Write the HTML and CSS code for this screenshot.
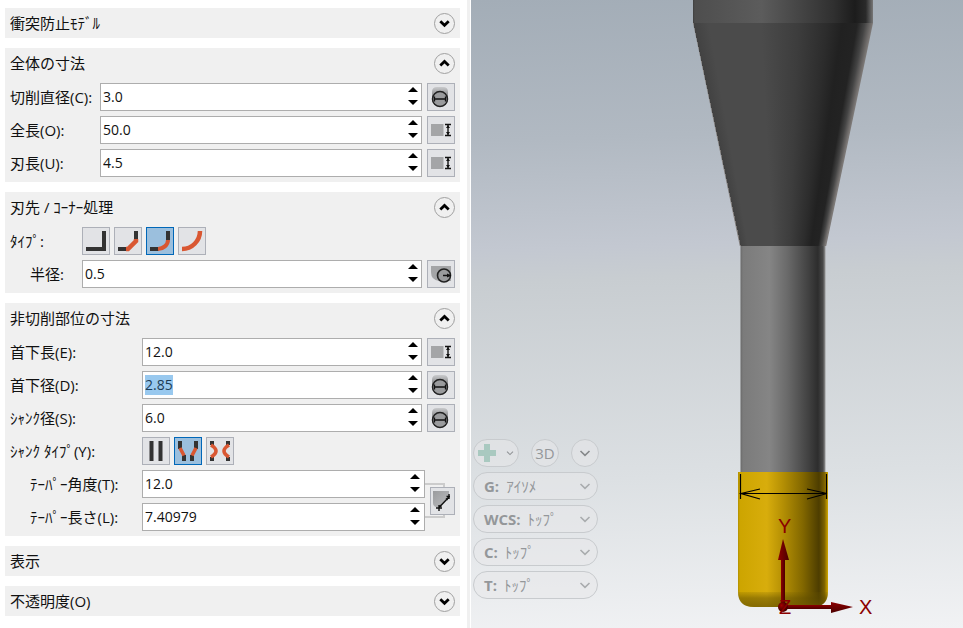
FILE: index.html
```html
<!DOCTYPE html>
<html lang="ja">
<head>
<meta charset="utf-8">
<title>工具の寸法</title>
<link rel="stylesheet" href="styles.css">
</head>
<body>
<svg class="defs" aria-hidden="true">
  <defs>
    <linearGradient id="icon-shade" x1="0" y1="0" x2="0" y2="1">
      <stop offset="0" stop-color="#c9cacc"/><stop offset=".4" stop-color="#8f9092"/><stop offset="1" stop-color="#6e6f71"/>
    </linearGradient>
    <linearGradient id="icon-grey" x1="0" y1="0" x2="1" y2="1">
      <stop offset="0" stop-color="#9a9b9d"/><stop offset="1" stop-color="#bcbdc0"/>
    </linearGradient>
  </defs>
  <symbol id="chev-down" viewBox="0 0 11 11"><path d="M1.300 3.300 5.500 7.300 9.700 3.300" fill="none" stroke="#000" stroke-width="2.800"/></symbol>
  <symbol id="chev-up" viewBox="0 0 11 11"><path d="M1.300 7.500 5.500 3.500 9.700 7.500" fill="none" stroke="#000" stroke-width="2.800"/></symbol>
  <symbol id="chev-thin" viewBox="0 0 12 12"><path d="M1.500 4 6 8.300 10.500 4" fill="none" stroke="currentColor" stroke-width="1.600"/></symbol>
  <symbol id="tri-up" viewBox="0 0 10 5"><path d="M0 5 5 0 10 5Z"/></symbol>
  <symbol id="tri-down" viewBox="0 0 10 5"><path d="M0 0 5 5 10 0Z"/></symbol>
  <symbol id="i-diameter" viewBox="0 0 26 26">
    <path d="M4 15V8Q4 3 9 3h6q5 0 5 5v7a8 8 0 0 1-16 0Z" fill="url(#icon-shade)"/>
    <circle cx="12" cy="15" r="7.500" fill="#9a9b9d" stroke="#222" stroke-width="1.500"/>
    <path d="M6 15h12M6.500 12.500v5M17.500 12.500v5" fill="none" stroke="#111" stroke-width="1.300"/>
  </symbol>
  <symbol id="i-length" viewBox="0 0 26 26">
    <path d="M3 7h12.500v12H3Z" fill="#a4a5a7"/>
    <path d="M17 7.500h6M17 18.500h6M20 7v12" fill="none" stroke="#111" stroke-width="1.400"/>
    <path d="m20 8 2 3h-4ZM20 18l2-3h-4Z" fill="#111"/>
  </symbol>
  <symbol id="i-radius" viewBox="0 0 26 26">
    <path d="M3 5h20v15H11q-8-1-8-9Z" fill="#a4a5a7"/>
    <circle cx="16" cy="14.500" r="6.500" fill="#9a9b9d" stroke="#222" stroke-width="1.600"/>
    <path d="M15 14.500h8" stroke="#111" stroke-width="1.500"/>
    <path d="m23 14.500-4-2v4Z" fill="#111"/>
  </symbol>
  <symbol id="i-taper" viewBox="0 0 23 26">
    <path d="M2 3h16v6L8 19H5q-3-1-3-4Z" fill="url(#icon-grey)"/>
    <path d="M7.500 20 18 9M5 20h6M8 17v6M18 6v5M15.500 8.500H19" fill="none" stroke="#111" stroke-width="1.400"/>
    <path d="m8 19.500 1-3 2 2ZM17.500 9.500l-3 1 2 2Z" fill="#111"/>
  </symbol>
  <symbol id="c-square" viewBox="0 0 26 26"><path d="M3 21h18V3" fill="none" stroke="#333" stroke-width="4"/></symbol>
  <symbol id="c-chamfer" viewBox="0 0 26 26"><path d="M3 21h9M21 12V3" fill="none" stroke="#333" stroke-width="4"/><path d="M11 21h2l8-8v-2" fill="none" stroke="#d95732" stroke-width="4.500"/></symbol>
  <symbol id="c-round" viewBox="0 0 26 26"><path d="M3 21h9M21 12V3" fill="none" stroke="#333" stroke-width="4"/><path d="M11 21c5 0 10-4 10-9" fill="none" stroke="#d95732" stroke-width="4"/></symbol>
  <symbol id="c-full" viewBox="0 0 26 26"><path d="M21 3A18 18 0 0 1 3 21" fill="none" stroke="#d95732" stroke-width="4.500"/></symbol>
  <symbol id="s-straight" viewBox="0 0 26 26"><path d="M8.500 3v20M17.500 3v20" fill="none" stroke="#333" stroke-width="4"/></symbol>
  <symbol id="s-taper" viewBox="0 0 26 26"><path d="M5 3v8M9 17v6M21 3v8M17 17v6" fill="none" stroke="#333" stroke-width="4"/><path d="m5 10 4 7.500M21 10l-4 7.500" fill="none" stroke="#d95732" stroke-width="3.600"/></symbol>
  <symbol id="s-curve" viewBox="0 0 26 26"><path d="M5 3v4M5 19v4M21 3v4M21 19v4" fill="none" stroke="#333" stroke-width="4"/><path d="M4 7q5 3 5 6t-5 6M22 7q-5 3-5 6t5 6" fill="none" stroke="#d95732" stroke-width="3.600"/></symbol>
</svg>

<main class="app">
  <form class="panel">
    <section class="group">
      <header class="group-head"><h2>衝突防止ﾓﾃﾞﾙ</h2><button type="button" class="toggle" aria-expanded="false" aria-label="展開"><svg><use href="#chev-down"/></svg></button></header>
    </section>

    <section class="group">
      <header class="group-head"><h2>全体の寸法</h2><button type="button" class="toggle" aria-expanded="true" aria-label="折りたたむ"><svg><use href="#chev-up"/></svg></button></header>
      <div class="fields fields-overall">
        <label for="cut-dia">切削直径(C):</label>
        <div class="spin"><input id="cut-dia" type="text" value="3.0"><span class="steps"><button type="button" aria-label="増やす"><svg><use href="#tri-up"/></svg></button><button type="button" aria-label="減らす"><svg><use href="#tri-down"/></svg></button></span></div>
        <button type="button" class="tool" aria-label="直径を選択"><svg><use href="#i-diameter"/></svg></button>
        <label for="total-len">全長(O):</label>
        <div class="spin"><input id="total-len" type="text" value="50.0"><span class="steps"><button type="button" aria-label="増やす"><svg><use href="#tri-up"/></svg></button><button type="button" aria-label="減らす"><svg><use href="#tri-down"/></svg></button></span></div>
        <button type="button" class="tool" aria-label="長さを選択"><svg><use href="#i-length"/></svg></button>
        <label for="flute-len">刃長(U):</label>
        <div class="spin"><input id="flute-len" type="text" value="4.5"><span class="steps"><button type="button" aria-label="増やす"><svg><use href="#tri-up"/></svg></button><button type="button" aria-label="減らす"><svg><use href="#tri-down"/></svg></button></span></div>
        <button type="button" class="tool" aria-label="長さを選択"><svg><use href="#i-length"/></svg></button>
      </div>
    </section>

    <section class="group">
      <header class="group-head"><h2>刃先 / ｺｰﾅｰ処理</h2><button type="button" class="toggle" aria-expanded="true" aria-label="折りたたむ"><svg><use href="#chev-up"/></svg></button></header>
      <div class="fields fields-corner">
        <span class="caption" id="corner-type">ﾀｲﾌﾟ:</span>
        <div class="choices" role="group" aria-labelledby="corner-type">
          <button type="button" class="tool" aria-pressed="false" aria-label="スクエア"><svg><use href="#c-square"/></svg></button>
          <button type="button" class="tool" aria-pressed="false" aria-label="面取り"><svg><use href="#c-chamfer"/></svg></button>
          <button type="button" class="tool" aria-pressed="true" aria-label="コーナー半径"><svg><use href="#c-round"/></svg></button>
          <button type="button" class="tool" aria-pressed="false" aria-label="フル半径"><svg><use href="#c-full"/></svg></button>
        </div>
        <label class="sub" for="radius">半径:</label>
        <div class="spin"><input id="radius" type="text" value="0.5"><span class="steps"><button type="button" aria-label="増やす"><svg><use href="#tri-up"/></svg></button><button type="button" aria-label="減らす"><svg><use href="#tri-down"/></svg></button></span></div>
        <button type="button" class="tool" aria-label="半径を選択"><svg><use href="#i-radius"/></svg></button>
      </div>
    </section>

    <section class="group">
      <header class="group-head"><h2>非切削部位の寸法</h2><button type="button" class="toggle" aria-expanded="true" aria-label="折りたたむ"><svg><use href="#chev-up"/></svg></button></header>
      <div class="fields fields-shank">
        <label for="neck-len">首下長(E):</label>
        <div class="spin"><input id="neck-len" type="text" value="12.0"><span class="steps"><button type="button" aria-label="増やす"><svg><use href="#tri-up"/></svg></button><button type="button" aria-label="減らす"><svg><use href="#tri-down"/></svg></button></span></div>
        <button type="button" class="tool" aria-label="長さを選択"><svg><use href="#i-length"/></svg></button>
        <label for="neck-dia">首下径(D):</label>
        <div class="spin"><input id="neck-dia" type="text" value="2.85"><span class="steps"><button type="button" aria-label="増やす"><svg><use href="#tri-up"/></svg></button><button type="button" aria-label="減らす"><svg><use href="#tri-down"/></svg></button></span></div>
        <button type="button" class="tool" aria-label="直径を選択"><svg><use href="#i-diameter"/></svg></button>
        <label for="shank-dia">ｼｬﾝｸ径(S):</label>
        <div class="spin"><input id="shank-dia" type="text" value="6.0"><span class="steps"><button type="button" aria-label="増やす"><svg><use href="#tri-up"/></svg></button><button type="button" aria-label="減らす"><svg><use href="#tri-down"/></svg></button></span></div>
        <button type="button" class="tool" aria-label="直径を選択"><svg><use href="#i-diameter"/></svg></button>
        <span class="caption" id="shank-type">ｼｬﾝｸ ﾀｲﾌﾟ(Y):</span>
        <div class="choices" role="group" aria-labelledby="shank-type">
          <button type="button" class="tool" aria-pressed="false" aria-label="ストレート"><svg><use href="#s-straight"/></svg></button>
          <button type="button" class="tool" aria-pressed="true" aria-label="テーパー"><svg><use href="#s-taper"/></svg></button>
          <button type="button" class="tool" aria-pressed="false" aria-label="カーブ"><svg><use href="#s-curve"/></svg></button>
        </div>
      </div>
      <div class="linked">
        <div class="fields fields-taper">
          <label class="sub" for="taper-angle">ﾃｰﾊﾟｰ角度(T):</label>
          <div class="spin"><input id="taper-angle" type="text" value="12.0"><span class="steps"><button type="button" aria-label="増やす"><svg><use href="#tri-up"/></svg></button><button type="button" aria-label="減らす"><svg><use href="#tri-down"/></svg></button></span></div>
          <label class="sub" for="taper-len">ﾃｰﾊﾟｰ長さ(L):</label>
          <div class="spin"><input id="taper-len" type="text" value="7.40979"><span class="steps"><button type="button" aria-label="増やす"><svg><use href="#tri-up"/></svg></button><button type="button" aria-label="減らす"><svg><use href="#tri-down"/></svg></button></span></div>
        </div>
        <div class="bracket"><button type="button" class="tool" aria-label="テーパーを選択"><svg><use href="#i-taper"/></svg></button></div>
      </div>
    </section>

    <section class="group">
      <header class="group-head"><h2>表示</h2><button type="button" class="toggle" aria-expanded="false" aria-label="展開"><svg><use href="#chev-down"/></svg></button></header>
    </section>
    <section class="group">
      <header class="group-head"><h2>不透明度(O)</h2><button type="button" class="toggle" aria-expanded="false" aria-label="展開"><svg><use href="#chev-down"/></svg></button></header>
    </section>
  </form>

  <section class="viewport" aria-label="工具プレビュー">
    <svg class="scene" viewBox="0 0 492 628" preserveAspectRatio="xMidYMin slice">
      <defs>
        <linearGradient id="g-shank">
          <stop offset="0" stop-color="#3f3f3f"/><stop offset=".01" stop-color="#4e4e4e"/><stop offset=".2" stop-color="#555"/><stop offset=".38" stop-color="#5c5c5c"/><stop offset=".6" stop-color="#444"/><stop offset=".78" stop-color="#303030"/><stop offset=".9" stop-color="#1c1c1c"/><stop offset=".96" stop-color="#2a2a2a"/><stop offset="1" stop-color="#777"/>
        </linearGradient>
        <linearGradient id="g-neck">
          <stop offset="0" stop-color="#6a6a6a"/><stop offset=".03" stop-color="#7b7b7b"/><stop offset=".34" stop-color="#858585"/><stop offset=".55" stop-color="#6a6a6a"/><stop offset=".8" stop-color="#414141"/><stop offset=".91" stop-color="#2d2d2d"/><stop offset=".97" stop-color="#4a4a4a"/><stop offset="1" stop-color="#999"/>
        </linearGradient>
        <linearGradient id="g-gold">
          <stop offset="0" stop-color="#b08f00"/><stop offset=".02" stop-color="#cda500"/><stop offset=".32" stop-color="#d8ad0c"/><stop offset=".5" stop-color="#b48f04"/><stop offset=".72" stop-color="#826700"/><stop offset=".9" stop-color="#4d3d00"/><stop offset=".96" stop-color="#7d6200"/><stop offset="1" stop-color="#d2a800"/>
        </linearGradient>
        <linearGradient id="g-tip" x1="0" y1="0" x2="0" y2="1">
          <stop offset="0" stop-color="#6b5700" stop-opacity=".15"/><stop offset=".4" stop-color="#5e4c00" stop-opacity=".5"/><stop offset="1" stop-color="#6a5500" stop-opacity=".75"/>
        </linearGradient>
        <radialGradient id="g-ball" cx=".35" cy=".35"><stop offset="0" stop-color="#a30000"/><stop offset="1" stop-color="#4a0000"/></radialGradient>
        <linearGradient id="g-axis-y"><stop offset="0" stop-color="#8d0000"/><stop offset="1" stop-color="#4a0000"/></linearGradient>
        <linearGradient id="g-axis-x" x1="0" y1="0" x2="0" y2="1"><stop offset="0" stop-color="#8d0000"/><stop offset="1" stop-color="#4a0000"/></linearGradient>
      </defs>
      <path d="M222 0h180v23H222Z" fill="url(#g-shank)"/>
      <foreignObject x="222" y="23" width="180" height="223"><div class="cone"></div></foreignObject>
      <path d="M269.500 246h85v227h-85Z" fill="url(#g-neck)"/>
      <path d="M267 472h90v119q0 16-16 16h-58q-16 0-16-16Z" fill="url(#g-gold)"/>
      <path d="M267 592h90q0 15-16 15h-58q-16 0-16-15Z" fill="url(#g-tip)"/>
      <g fill="none" stroke="#000" stroke-width="1.200">
        <path d="M269.500 474v25M355.500 474v25M270 493.500h86M289 489l-19 4.500 19 5.500M336 489l20 4.500-20 5.500"/>
      </g>
      <path d="M310 607v-48h4v48Z" fill="url(#g-axis-y)"/>
      <path d="m312 539 6 21h-11Z" fill="url(#g-axis-y)"/>
      <path d="M312 605h49v4h-49Z" fill="url(#g-axis-x)"/>
      <path d="m382 607-22 6v-11Z" fill="url(#g-axis-x)"/>
      <circle cx="312" cy="607" r="5" fill="url(#g-ball)"/>
      <g class="axis-name">
        <text x="307" y="533">Y</text>
        <text x="388" y="614">X</text>
        <text x="308" y="614">Z</text>
      </g>
    </svg>

    <div class="view-tools">
      <div class="view-row">
        <button type="button" class="pill add" aria-label="追加"><svg class="plus" viewBox="0 0 18 18"><path d="M6 0h6v6h6v6h-6v6H6v-6H0V6h6Z" fill="#a9c9c0"/></svg><svg class="chev small"><use href="#chev-thin"/></svg></button>
        <button type="button" class="pill round">3D</button>
        <button type="button" class="pill round dark" aria-label="その他"><svg class="chev"><use href="#chev-thin"/></svg></button>
      </div>
      <div class="pill pick"><label for="g-view">G:</label><select id="g-view"><option>ｱｲｿﾒ</option></select><svg class="chev"><use href="#chev-thin"/></svg></div>
      <div class="pill pick"><label for="wcs-view">WCS:</label><select id="wcs-view"><option>ﾄｯﾌﾟ</option></select><svg class="chev"><use href="#chev-thin"/></svg></div>
      <div class="pill pick"><label for="c-view">C:</label><select id="c-view"><option>ﾄｯﾌﾟ</option></select><svg class="chev"><use href="#chev-thin"/></svg></div>
      <div class="pill pick"><label for="t-view">T:</label><select id="t-view"><option>ﾄｯﾌﾟ</option></select><svg class="chev"><use href="#chev-thin"/></svg></div>
    </div>
  </section>
</main>
<script src="script.js"></script>
</body>
</html>
```
FILE: styles.css
```css
* { box-sizing: border-box; }

body {
  margin: 0;
  background: #fff;
  color: #111;
  font: 15px/20px "Open Sans", "Noto Sans CJK JP", sans-serif;
}

button, input, select { font: inherit; color: inherit; }
button { padding: 0; border: 0; background: none; }
svg { display: block; }
.defs { position: absolute; width: 0; height: 0; }

.app {
  display: grid;
  grid-template-columns: minmax(0, 471fr) minmax(0, 492fr);
  min-height: 100vh;
}

/* Parameter panel */
.panel {
  display: flex;
  flex-direction: column;
  gap: 10px;
  margin-right: 1px;
  padding: 8px 7px 8px 5px;
  border-right: 3px solid #f0f0f0;
}

.group { background: #f0f0f0; }

.group-head {
  display: flex;
  align-items: center;
  justify-content: space-between;
  height: 30px;
  padding: 0 5px;
}

.group-head h2 { margin: 0; font-size: 15px; font-weight: 400; }

.toggle {
  display: grid;
  place-items: center;
  width: 21px;
  height: 21px;
  border: 1px solid #a0a0a0;
  border-radius: 50%;
  background: #f0f0f0;
}
.toggle svg { width: 11px; height: 11px; }

.fields {
  display: grid;
  align-items: center;
  gap: 5px 0;
  padding: 5px;
}
.fields-overall { grid-template-columns: 90px minmax(0, 1fr) 33px; }
.fields-corner { grid-template-columns: 72px minmax(0, 1fr) 33px; }
.fields-shank { grid-template-columns: 132px minmax(0, 1fr) 33px; }
.fields-taper { grid-template-columns: 132px minmax(0, 1fr); flex: 1; padding: 0; }

.fields label, .caption { white-space: nowrap; }
.fields .sub { padding-left: 20px; }

.fields > .tool { justify-self: end; }

.choices {
  display: flex;
  grid-column: 2 / -1;
  gap: 4px;
}

.spin {
  display: flex;
  height: 28px;
  border: 1px solid #adadad;
  background: #fff;
}
.spin input {
  flex: 1;
  min-width: 0;
  padding: 0 2px;
  border: 0;
  outline: 0;
  background: none;
  font-size: 14px;
}
.spin input::selection { background: #99c9ef; color: #1d3c56; }

.steps {
  display: flex;
  flex-direction: column;
  justify-content: center;
  gap: 8px;
  width: 13px;
  padding-bottom: 2px;
}
.fields-taper .steps { width: 14px; }
.steps button, .steps svg { width: 10px; height: 5px; }

.tool {
  display: grid;
  place-items: center;
  width: 28px;
  height: 28px;
  border: 1px solid #adb0b8;
  background: #e2e3e6;
}
.tool svg { width: 26px; height: 26px; }
.tool[aria-pressed="true"] { border-color: #0067b8; background: #9bbfdd; }

.linked { display: flex; padding: 0 5px 5px; }

.bracket {
  position: relative;
  display: flex;
  align-items: center;
  padding-left: 5px;
}
.bracket::before {
  position: absolute;
  top: 13px;
  bottom: 13px;
  left: 0;
  width: 18px;
  border: 2px solid #ccc;
  border-left: 0;
  content: "";
}
.bracket .tool { position: relative; width: 25px; }
.bracket .tool svg { width: 23px; }

/* 3D viewport */
.viewport {
  position: relative;
  overflow: hidden;
  background: linear-gradient(178deg, #a3adb7 0%, #b1b9c2 22%, #c3c8d1 39%, #c8cdd1 44%, #dce0e3 75%, #f1f2f4 100%);
}
.scene { width: 100%; height: 100%; }

/* Shading rays meet at the apex of the cone, below its cut-off end */
.cone {
  height: 100%;
  background: conic-gradient(from -12deg at 50% 189%, #424242 0deg, #4b4b4b 2deg, #4b4b4b 9deg, #3d3d3d 14deg, #2c2c2c 18deg, #212121 20deg, #232323 22deg, #444 23deg, #7c7876 24deg);
  clip-path: polygon(0 0, 100% 0, 74% 100%, 26% 100%);
}

.axis-name {
  fill: #8b0000;
  font-family: "Liberation Sans", sans-serif;
  font-size: 20px;
}

.view-tools {
  position: absolute;
  bottom: 29px;
  left: 2px;
  display: flex;
  flex-direction: column;
  gap: 5px;
  color: #94979a;
}

.view-row { display: flex; gap: 12px; }

.pill {
  display: flex;
  align-items: center;
  height: 28px;
  border: 1px solid #c8cbce;
  border-radius: 14px;
  background: rgb(232 232 234 / 50%);
}
.add { justify-content: space-between; width: 46px; padding: 0 4px; }
.plus { width: 18px; height: 18px; }
.round { justify-content: center; width: 28px; }
.chev { width: 12px; height: 12px; color: #a9acae; }
.dark .chev { color: #85888a; }
.add .small { width: 8px; height: 8px; color: #909396; }

.pick { gap: 7px; width: 125px; padding: 0 6px 0 10px; }
.pick label { font-weight: 700; }
.pick select {
  flex: 1;
  min-width: 0;
  padding: 0;
  border: 0;
  outline: 0;
  appearance: none;
  background: none;
}
```
FILE: script.js
```js
// The neck diameter is the field being edited when the panel opens.
const neckDiameter = document.getElementById("neck-dia");
neckDiameter.focus();
neckDiameter.select();
```
